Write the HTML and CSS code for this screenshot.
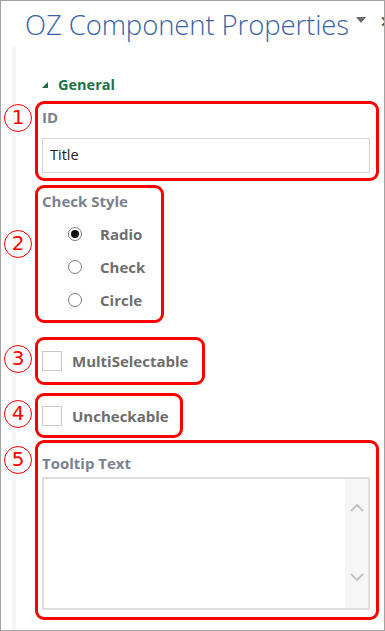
FILE: index.html
```html
<!DOCTYPE html>
<html lang="en">
<head>
  <meta charset="UTF-8" />
  <title>OZ Component Properties</title>
  <link rel="stylesheet" href="styles.css">
</head>
<body>
  <div class="pane">
    <div class="pane-head">
      <h1 class="pane-title">OZ Component Properties</h1>
      <span class="pane-menu"></span>
      <span class="pane-close">&#x2715;</span>
    </div>

    <div class="pane-body">
      <div class="section">
        <span class="section-arrow"></span>
        <span class="section-name">General</span>
      </div>

      <!-- 1 -->
      <div class="group group-id">
        <span class="mark">1</span>
        <div class="label">ID</div>
        <div class="textbox">Title</div>
      </div>

      <!-- 2 -->
      <div class="group group-style">
        <span class="mark">2</span>
        <div class="label">Check Style</div>
        <div class="radios">
          <div class="radio-row"><span class="radio on"></span>Radio</div>
          <div class="radio-row"><span class="radio"></span>Check</div>
          <div class="radio-row"><span class="radio"></span>Circle</div>
        </div>
      </div>

      <!-- 3 -->
      <div class="group group-multi">
        <span class="mark">3</span>
        <div class="check-row"><span class="checkbox"></span>MultiSelectable</div>
      </div>

      <!-- 4 -->
      <div class="group group-uncheck">
        <span class="mark">4</span>
        <div class="check-row"><span class="checkbox"></span>Uncheckable</div>
      </div>

      <!-- 5 -->
      <div class="group group-tip">
        <span class="mark">5</span>
        <div class="label">Tooltip Text</div>
        <div class="textarea">
          <div class="scroll">
            <svg width="14" height="10" viewBox="0 0 14 10"><path d="M1 8 L7 2 L13 8" fill="none" stroke="#c4c4c4" stroke-width="2"/></svg>
            <svg width="14" height="10" viewBox="0 0 14 10"><path d="M1 2 L7 8 L13 2" fill="none" stroke="#c4c4c4" stroke-width="2"/></svg>
          </div>
        </div>
      </div>
    </div>
  </div>
</body>
</html>
```

FILE: styles.css
```css
* {
  box-sizing: border-box;
}

body {
  margin: 0;
  font-family: 'Open Sans', 'Noto Sans', sans-serif;
  background: #fff;
}

.pane {
  width: 385px;
  height: 631px;
  border: 1px solid #a3a3a3;
  background: #fff;
  overflow: hidden;
  position: relative;
}

.pane-head {
  height: 46px;
  display: flex;
  align-items: center;
  padding-left: 24px;
  white-space: nowrap;
}

.pane-title {
  margin: 0;
  font-size: 27.5px;
  font-weight: 300;
  color: #3a63a8;
  letter-spacing: -0.1px;
}

.pane-menu {
  margin-left: 7px;
  margin-top: -8px;
  width: 0;
  height: 0;
  border-left: 5px solid transparent;
  border-right: 5px solid transparent;
  border-top: 6px solid #6a6a6a;
}

.pane-close {
  margin-left: 14px;
  margin-top: -6px;
  font-size: 15px;
  font-weight: bold;
  color: #555;
}

.pane-body {
  height: 583px;
  margin-left: 11px;
  border-left: 4px solid #f6f6f6;
  padding-left: 19px;
  padding-right: 5px;
  padding-top: 26px;
}

.section {
  display: flex;
  align-items: center;
  height: 22px;
  padding-left: 7px;
}

.section-arrow {
  width: 0;
  height: 0;
  border-left: 6px solid transparent;
  border-bottom: 6px solid #1e6e45;
  margin-right: 10px;
  margin-top: 1px;
}

.section-name {
  font-size: 14.5px;
  font-weight: bold;
  color: #217346;
}

.group {
  position: relative;
  border: 3px solid #f00;
  border-radius: 9px;
  padding: 2px 6px 4px 4px;
}

.mark {
  position: absolute;
  left: -34px;
  width: 28px;
  height: 28px;
  border: 1.5px solid #f00;
  border-radius: 50%;
  color: #f00;
  font-family: 'DejaVu Sans', sans-serif;
  font-size: 20px;
  line-height: 25px;
  text-align: center;
}

.label {
  font-size: 15px;
  font-weight: bold;
  color: #7a8290;
  height: 22px;
  line-height: 22px;
}

.group-id {
  margin-top: 6px;
  height: 80px;
}

.group-id .mark {
  top: 0px;
}

.textbox {
  margin-top: 10px;
  height: 35px;
  border: 1px solid #d6d6d6;
  padding-left: 7px;
  line-height: 32px;
  font-size: 14.5px;
  color: #222;
}

.group-style {
  margin-top: 4px;
  width: 129px;
  height: 138px;
}

.group-style .mark {
  top: 42px;
}

.radios {
  padding-left: 26px;
  padding-top: 5px;
}

.radio-row {
  display: flex;
  align-items: center;
  height: 33px;
  font-size: 15px;
  font-weight: bold;
  color: #6e6e6e;
}

.radio {
  width: 14px;
  height: 14px;
  border: 1px solid #7a7a7a;
  border-radius: 50%;
  margin-right: 18px;
  display: flex;
  align-items: center;
  justify-content: center;
}

.radio.on::after {
  content: "";
  width: 8px;
  height: 8px;
  border-radius: 50%;
  background: #111;
}

.check-row {
  display: flex;
  align-items: center;
  height: 100%;
  font-size: 15px;
  font-weight: bold;
  color: #6e6e6e;
}

.checkbox {
  width: 20px;
  height: 20px;
  border: 1px solid #c9c9c9;
  margin-right: 10px;
}

.group-multi {
  margin-top: 14px;
  width: 170px;
  height: 48px;
  padding-top: 0;
  padding-bottom: 0;
}

.group-multi .mark {
  top: 5px;
}

.group-uncheck {
  margin-top: 8px;
  width: 148px;
  height: 45px;
  padding-top: 0;
  padding-bottom: 0;
}

.group-uncheck .mark {
  top: 4px;
}

.group-tip {
  margin-top: 2px;
  height: 180px;
}

.group-tip .mark {
  top: 3px;
}

.group-tip .label {
  margin-top: 7px;
}

.textarea {
  margin-top: 3px;
  height: 133px;
  border: 2px solid #dedede;
  display: flex;
  justify-content: flex-end;
}

.scroll {
  width: 23px;
  background: #f6f6f6;
  display: flex;
  flex-direction: column;
  align-items: center;
  justify-content: space-between;
  padding: 24px 0 26px;
}
```
